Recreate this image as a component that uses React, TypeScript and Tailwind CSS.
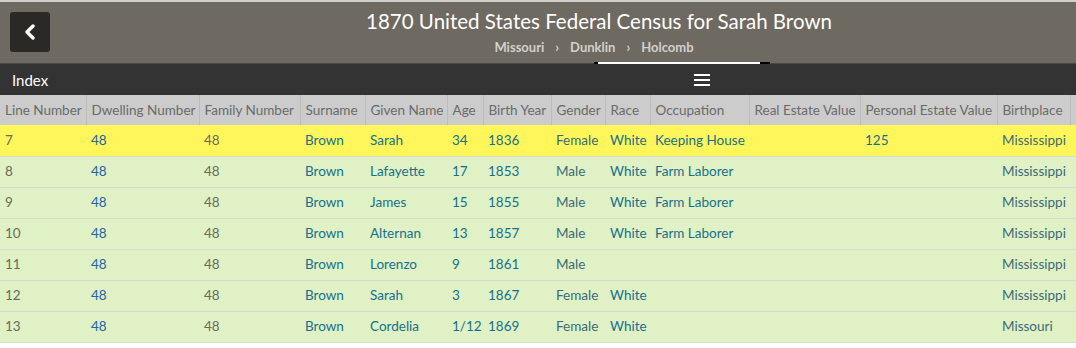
import React from "react";

const font = { fontFamily: "Lato, 'Open Sans', sans-serif" };

type Col = { label: string; w: string; tone: string };

const GRAY = "text-[#6b6a5c]";
const BLUE = "text-[#2563a6]";
const TEAL = "text-[#17708b]";
const SLATE = "text-[#3b6b78]";

const columns: Col[] = [
  { label: "Line Number", w: "w-[86px]", tone: GRAY },
  { label: "Dwelling Number", w: "w-[113px]", tone: BLUE },
  { label: "Family Number", w: "w-[101px]", tone: GRAY },
  { label: "Surname", w: "w-[65px]", tone: TEAL },
  { label: "Given Name", w: "w-[82px]", tone: TEAL },
  { label: "Age", w: "w-[36px]", tone: TEAL },
  { label: "Birth Year", w: "w-[68px]", tone: TEAL },
  { label: "Gender", w: "w-[54px]", tone: SLATE },
  { label: "Race", w: "w-[45px]", tone: TEAL },
  { label: "Occupation", w: "w-[99px]", tone: TEAL },
  { label: "Real Estate Value", w: "w-[111px]", tone: TEAL },
  { label: "Personal Estate Value", w: "w-[137px]", tone: TEAL },
  { label: "Birthplace", w: "w-[73px]", tone: SLATE },
];

const rows: string[][] = [
  ["7", "48", "48", "Brown", "Sarah", "34", "1836", "Female", "White", "Keeping House", "", "125", "Mississippi"],
  ["8", "48", "48", "Brown", "Lafayette", "17", "1853", "Male", "White", "Farm Laborer", "", "", "Mississippi"],
  ["9", "48", "48", "Brown", "James", "15", "1855", "Male", "White", "Farm Laborer", "", "", "Mississippi"],
  ["10", "48", "48", "Brown", "Alternan", "13", "1857", "Male", "White", "Farm Laborer", "", "", "Mississippi"],
  ["11", "48", "48", "Brown", "Lorenzo", "9", "1861", "Male", "", "", "", "", "Mississippi"],
  ["12", "48", "48", "Brown", "Sarah", "3", "1867", "Female", "White", "", "", "", "Mississippi"],
  ["13", "48", "48", "Brown", "Cordelia", "1/12", "1869", "Female", "White", "", "", "", "Missouri"],
];

function Chevron() {
  return <span className="mx-[11px] text-[13px]">›</span>;
}

export default function App() {
  return (
    <div className="w-[1076px] h-[348px] bg-white overflow-hidden" style={font}>
      {/* Title bar */}
      <header className="relative h-[63px] bg-[#6e6961] border-t-2 border-[#d2d0cc] flex items-start">
        <button className="ml-[10px] mt-[10px] w-[40px] h-[40px] rounded-[3px] bg-[#2b2926] flex items-center justify-center">
          <svg width="14" height="16" viewBox="0 0 14 16">
            <path d="M10 2 L4 8 L10 14" fill="none" stroke="white" strokeWidth="3.4" strokeLinecap="round" strokeLinejoin="round" />
          </svg>
        </button>
        <div className="flex-1 flex flex-col items-center pr-[50px]">
          <h1 className="text-[20.5px] leading-[24px] mt-[7px] text-white ml-[122px]">1870 United States Federal Census for Sarah Brown</h1>
          <div className="mt-[6px] ml-[112px] text-[13px] font-bold text-[#d4d0ca] flex items-center leading-[16px]">
            <span>Missouri</span>
            <Chevron />
            <span>Dunklin</span>
            <Chevron />
            <span>Holcomb</span>
          </div>
        </div>
        <div className="absolute left-[594px] bottom-[-1px] w-[176px] h-[2px] bg-white border-l-[4px] border-r-[10px] border-black" />
      </header>

      {/* Index bar */}
      <div className="h-[32px] bg-[#333333] border-t border-[#4b4843] flex items-center">
        <span className="ml-[12px] mt-[1px] text-[15px] text-white">Index</span>
        <div className="ml-[646px] flex flex-col gap-[3px]">
          <span className="block w-[16px] h-[2px] bg-white" />
          <span className="block w-[16px] h-[2px] bg-white" />
          <span className="block w-[16px] h-[2px] bg-white" />
        </div>
      </div>

      {/* Census table */}
      <table className="border-collapse table-fixed text-[13.5px] w-[1090px]">
        <thead>
          <tr className="h-[30px] bg-[#cccccc]">
            {columns.map((c, i) => (
              <th
                key={c.label}
                className={`${c.w} font-normal text-left text-[#6a6a6a] pl-[5px] whitespace-nowrap ${i > 0 ? "border-l border-[#bcbcbc]" : ""}`}
              >
                {c.label}
              </th>
            ))}
            <th className="border-l border-[#bcbcbc]" />
          </tr>
        </thead>
        <tbody>
          {rows.map((r, ri) => (
            <tr
              key={ri}
              className={`h-[31px] border-b border-[#d5dccd] ${ri === 0 ? "bg-[#fff65c]" : "bg-[#dff1c5]"}`}
            >
              {r.map((v, ci) => (
                <td key={ci} className={`pl-[5px] whitespace-nowrap ${columns[ci].tone}`}>
                  {v}
                </td>
              ))}
              <td />
            </tr>
          ))}
        </tbody>
      </table>
    </div>
  );
}
